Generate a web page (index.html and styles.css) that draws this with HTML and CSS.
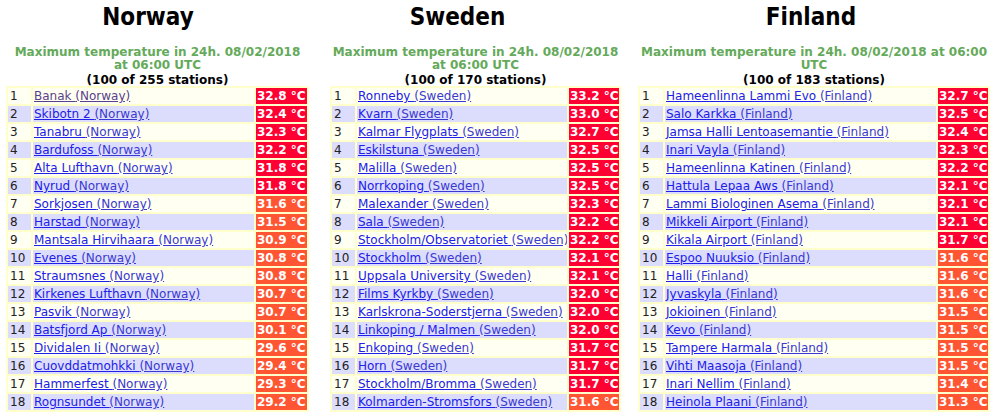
FILE: index.html
```html
<!DOCTYPE html>
<html>
<head>
<meta charset="utf-8">
<title>Maximum temperature</title>
<link rel="stylesheet" href="styles.css">
</head>
<body>
<div class="page">
  <section class="col col-norway">
    <h1 class="country">Norway</h1>
    <p class="sub">Maximum temperature in 24h. 08/02/2018 at 06:00 UTC</p>
    <p class="count">(100 of 255 stations)</p>
    <table class="rank">
      <colgroup><col class="c-num"><col class="c-name"><col class="c-temp"></colgroup>
      <tr><td class="num">1</td><td class="name"><a class="visited" href="#">Banak </a><a class="visited" href="#">(Norway)</a></td><td class="t hot">32.8 °C</td></tr>
      <tr><td class="num">2</td><td class="name"><a href="#">Skibotn 2 </a><a href="#">(Norway)</a></td><td class="t hot">32.4 °C</td></tr>
      <tr><td class="num">3</td><td class="name"><a href="#">Tanabru </a><a href="#">(Norway)</a></td><td class="t hot">32.3 °C</td></tr>
      <tr><td class="num">4</td><td class="name"><a href="#">Bardufoss </a><a href="#">(Norway)</a></td><td class="t hot">32.2 °C</td></tr>
      <tr><td class="num">5</td><td class="name"><a href="#">Alta Lufthavn </a><a href="#">(Norway)</a></td><td class="t hot">31.8 °C</td></tr>
      <tr><td class="num">6</td><td class="name"><a href="#">Nyrud </a><a href="#">(Norway)</a></td><td class="t hot">31.8 °C</td></tr>
      <tr><td class="num">7</td><td class="name"><a href="#">Sorkjosen </a><a href="#">(Norway)</a></td><td class="t warm">31.6 °C</td></tr>
      <tr><td class="num">8</td><td class="name"><a href="#">Harstad </a><a href="#">(Norway)</a></td><td class="t warm">31.5 °C</td></tr>
      <tr><td class="num">9</td><td class="name"><a href="#">Mantsala Hirvihaara </a><a href="#">(Norway)</a></td><td class="t warm">30.9 °C</td></tr>
      <tr><td class="num">10</td><td class="name"><a href="#">Evenes </a><a href="#">(Norway)</a></td><td class="t warm">30.8 °C</td></tr>
      <tr><td class="num">11</td><td class="name"><a href="#">Straumsnes </a><a href="#">(Norway)</a></td><td class="t warm">30.8 °C</td></tr>
      <tr><td class="num">12</td><td class="name"><a href="#">Kirkenes Lufthavn </a><a href="#">(Norway)</a></td><td class="t warm">30.7 °C</td></tr>
      <tr><td class="num">13</td><td class="name"><a href="#">Pasvik </a><a href="#">(Norway)</a></td><td class="t warm">30.7 °C</td></tr>
      <tr><td class="num">14</td><td class="name"><a href="#">Batsfjord Ap </a><a href="#">(Norway)</a></td><td class="t warm">30.1 °C</td></tr>
      <tr><td class="num">15</td><td class="name"><a href="#">Dividalen Ii </a><a href="#">(Norway)</a></td><td class="t warm">29.6 °C</td></tr>
      <tr><td class="num">16</td><td class="name"><a href="#">Cuovddatmohkki </a><a href="#">(Norway)</a></td><td class="t warm">29.4 °C</td></tr>
      <tr><td class="num">17</td><td class="name"><a href="#">Hammerfest </a><a href="#">(Norway)</a></td><td class="t warm">29.3 °C</td></tr>
      <tr><td class="num">18</td><td class="name"><a href="#">Rognsundet </a><a href="#">(Norway)</a></td><td class="t warm">29.2 °C</td></tr>
    </table>
  </section>

  <section class="col col-sweden">
    <h1 class="country">Sweden</h1>
    <p class="sub">Maximum temperature in 24h. 08/02/2018 at 06:00 UTC</p>
    <p class="count">(100 of 170 stations)</p>
    <table class="rank">
      <colgroup><col class="c-num"><col class="c-name"><col class="c-temp"></colgroup>
      <tr><td class="num">1</td><td class="name"><a href="#">Ronneby </a><a href="#">(Sweden)</a></td><td class="t hot">33.2 °C</td></tr>
      <tr><td class="num">2</td><td class="name"><a href="#">Kvarn </a><a href="#">(Sweden)</a></td><td class="t hot">33.0 °C</td></tr>
      <tr><td class="num">3</td><td class="name"><a href="#">Kalmar Flygplats </a><a href="#">(Sweden)</a></td><td class="t hot">32.7 °C</td></tr>
      <tr><td class="num">4</td><td class="name"><a href="#">Eskilstuna </a><a href="#">(Sweden)</a></td><td class="t hot">32.5 °C</td></tr>
      <tr><td class="num">5</td><td class="name"><a href="#">Malilla </a><a href="#">(Sweden)</a></td><td class="t hot">32.5 °C</td></tr>
      <tr><td class="num">6</td><td class="name"><a href="#">Norrkoping </a><a href="#">(Sweden)</a></td><td class="t hot">32.5 °C</td></tr>
      <tr><td class="num">7</td><td class="name"><a href="#">Malexander </a><a href="#">(Sweden)</a></td><td class="t hot">32.3 °C</td></tr>
      <tr><td class="num">8</td><td class="name"><a href="#">Sala </a><a href="#">(Sweden)</a></td><td class="t hot">32.2 °C</td></tr>
      <tr><td class="num">9</td><td class="name"><a href="#">Stockholm/Observatoriet </a><a href="#">(Sweden)</a></td><td class="t hot">32.2 °C</td></tr>
      <tr><td class="num">10</td><td class="name"><a href="#">Stockholm </a><a href="#">(Sweden)</a></td><td class="t hot">32.1 °C</td></tr>
      <tr><td class="num">11</td><td class="name"><a href="#">Uppsala University </a><a href="#">(Sweden)</a></td><td class="t hot">32.1 °C</td></tr>
      <tr><td class="num">12</td><td class="name"><a href="#">Films Kyrkby </a><a href="#">(Sweden)</a></td><td class="t hot">32.0 °C</td></tr>
      <tr><td class="num">13</td><td class="name"><a href="#">Karlskrona-Soderstjerna </a><a href="#">(Sweden)</a></td><td class="t hot">32.0 °C</td></tr>
      <tr><td class="num">14</td><td class="name"><a href="#">Linkoping / Malmen </a><a href="#">(Sweden)</a></td><td class="t hot">32.0 °C</td></tr>
      <tr><td class="num">15</td><td class="name"><a href="#">Enkoping </a><a href="#">(Sweden)</a></td><td class="t hot">31.7 °C</td></tr>
      <tr><td class="num">16</td><td class="name"><a href="#">Horn </a><a href="#">(Sweden)</a></td><td class="t hot">31.7 °C</td></tr>
      <tr><td class="num">17</td><td class="name"><a href="#">Stockholm/Bromma </a><a href="#">(Sweden)</a></td><td class="t hot">31.7 °C</td></tr>
      <tr><td class="num">18</td><td class="name"><a href="#">Kolmarden-Stromsfors </a><a href="#">(Sweden)</a></td><td class="t warm">31.6 °C</td></tr>
    </table>
  </section>

  <section class="col col-finland">
    <h1 class="country">Finland</h1>
    <p class="sub">Maximum temperature in 24h. 08/02/2018 at 06:00 UTC</p>
    <p class="count">(100 of 183 stations)</p>
    <table class="rank">
      <colgroup><col class="c-num"><col class="c-name"><col class="c-temp"></colgroup>
      <tr><td class="num">1</td><td class="name"><a href="#">Hameenlinna Lammi Evo </a><a href="#">(Finland)</a></td><td class="t hot">32.7 °C</td></tr>
      <tr><td class="num">2</td><td class="name"><a href="#">Salo Karkka </a><a href="#">(Finland)</a></td><td class="t hot">32.5 °C</td></tr>
      <tr><td class="num">3</td><td class="name"><a href="#">Jamsa Halli Lentoasemantie </a><a href="#">(Finland)</a></td><td class="t hot">32.4 °C</td></tr>
      <tr><td class="num">4</td><td class="name"><a href="#">Inari Vayla </a><a href="#">(Finland)</a></td><td class="t hot">32.3 °C</td></tr>
      <tr><td class="num">5</td><td class="name"><a href="#">Hameenlinna Katinen </a><a href="#">(Finland)</a></td><td class="t hot">32.2 °C</td></tr>
      <tr><td class="num">6</td><td class="name"><a href="#">Hattula Lepaa Aws </a><a href="#">(Finland)</a></td><td class="t hot">32.1 °C</td></tr>
      <tr><td class="num">7</td><td class="name"><a href="#">Lammi Biologinen Asema </a><a href="#">(Finland)</a></td><td class="t hot">32.1 °C</td></tr>
      <tr><td class="num">8</td><td class="name"><a href="#">Mikkeli Airport </a><a href="#">(Finland)</a></td><td class="t hot">32.1 °C</td></tr>
      <tr><td class="num">9</td><td class="name"><a href="#">Kikala Airport </a><a href="#">(Finland)</a></td><td class="t hot">31.7 °C</td></tr>
      <tr><td class="num">10</td><td class="name"><a href="#">Espoo Nuuksio </a><a href="#">(Finland)</a></td><td class="t warm">31.6 °C</td></tr>
      <tr><td class="num">11</td><td class="name"><a href="#">Halli </a><a href="#">(Finland)</a></td><td class="t warm">31.6 °C</td></tr>
      <tr><td class="num">12</td><td class="name"><a href="#">Jyvaskyla </a><a href="#">(Finland)</a></td><td class="t warm">31.6 °C</td></tr>
      <tr><td class="num">13</td><td class="name"><a href="#">Jokioinen </a><a href="#">(Finland)</a></td><td class="t warm">31.5 °C</td></tr>
      <tr><td class="num">14</td><td class="name"><a href="#">Kevo </a><a href="#">(Finland)</a></td><td class="t warm">31.5 °C</td></tr>
      <tr><td class="num">15</td><td class="name"><a href="#">Tampere Harmala </a><a href="#">(Finland)</a></td><td class="t warm">31.5 °C</td></tr>
      <tr><td class="num">16</td><td class="name"><a href="#">Vihti Maasoja </a><a href="#">(Finland)</a></td><td class="t warm">31.5 °C</td></tr>
      <tr><td class="num">17</td><td class="name"><a href="#">Inari Nellim </a><a href="#">(Finland)</a></td><td class="t warm">31.4 °C</td></tr>
      <tr><td class="num">18</td><td class="name"><a href="#">Heinola Plaani </a><a href="#">(Finland)</a></td><td class="t warm">31.3 °C</td></tr>
    </table>
  </section>
</div>
</body>
</html>
```

FILE: styles.css
```css
html, body {
  margin: 0;
  padding: 0;
  background: #ffffff;
}

body {
  font-family: "DejaVu Sans", Verdana, sans-serif;
  font-size: 12px;
  color: #222222;
  overflow: hidden;
}

.page {
  display: flex;
  align-items: flex-start;
  padding-left: 6px;
}

.col {
  flex: none;
  display: flex;
  flex-direction: column;
  text-align: center;
}

.col-norway { width: 303px; }
.col-sweden { width: 291px; margin-left: 21px; }
.col-finland { width: 352px; margin-left: 17px; }

.country {
  margin: 0;
  padding-top: 3px;
  font-family: "DejaVu Sans Condensed", "DejaVu Sans", sans-serif;
  font-stretch: condensed;
  font-weight: bold;
  font-size: 24px;
  line-height: 28px;
  color: #000000;
}

.col-norway .country { padding-right: 19px; }
.col-sweden .country { padding-right: 36px; }
.col-finland .country { padding-right: 6px; }

.sub {
  margin: 15px 0 0;
  font-weight: bold;
  font-size: 12px;
  line-height: 13px;
  color: #64aa5a;
}

.col-norway .sub { padding: 0 6px; }

.count {
  margin: 1px 0 -1px;
  font-weight: bold;
  font-size: 12px;
  line-height: 14px;
  color: #000000;
}

.rank {
  border-collapse: separate;
  border-spacing: 2px;
  background: #ffffcc;
  table-layout: fixed;
  width: 100%;
  text-align: left;
}

.c-num { width: 23px; }
.col-norway .c-temp { width: 51px; }
.col-sweden .c-temp,
.col-finland .c-temp { width: 50px; }

.rank td {
  height: 16px;
  padding: 0 1px;
  line-height: 16px;
  white-space: nowrap;
  overflow: hidden;
  background: #fffff2;
}

.rank tr:nth-child(even) td {
  background: #dcdcfc;
}

.rank td.num {
  padding-left: 2px;
  color: #222222;
}

.rank a {
  color: #2020e8;
  text-decoration: underline;
}

.rank a + a {
  color: #3a3ad0;
}

.rank a.visited {
  color: #5a3f8c;
}

.rank td.t {
  font-weight: bold;
  color: #ffffff;
}

.rank tr td.hot { background: #ff0033; }
.rank tr td.warm { background: #ff5533; }
```
